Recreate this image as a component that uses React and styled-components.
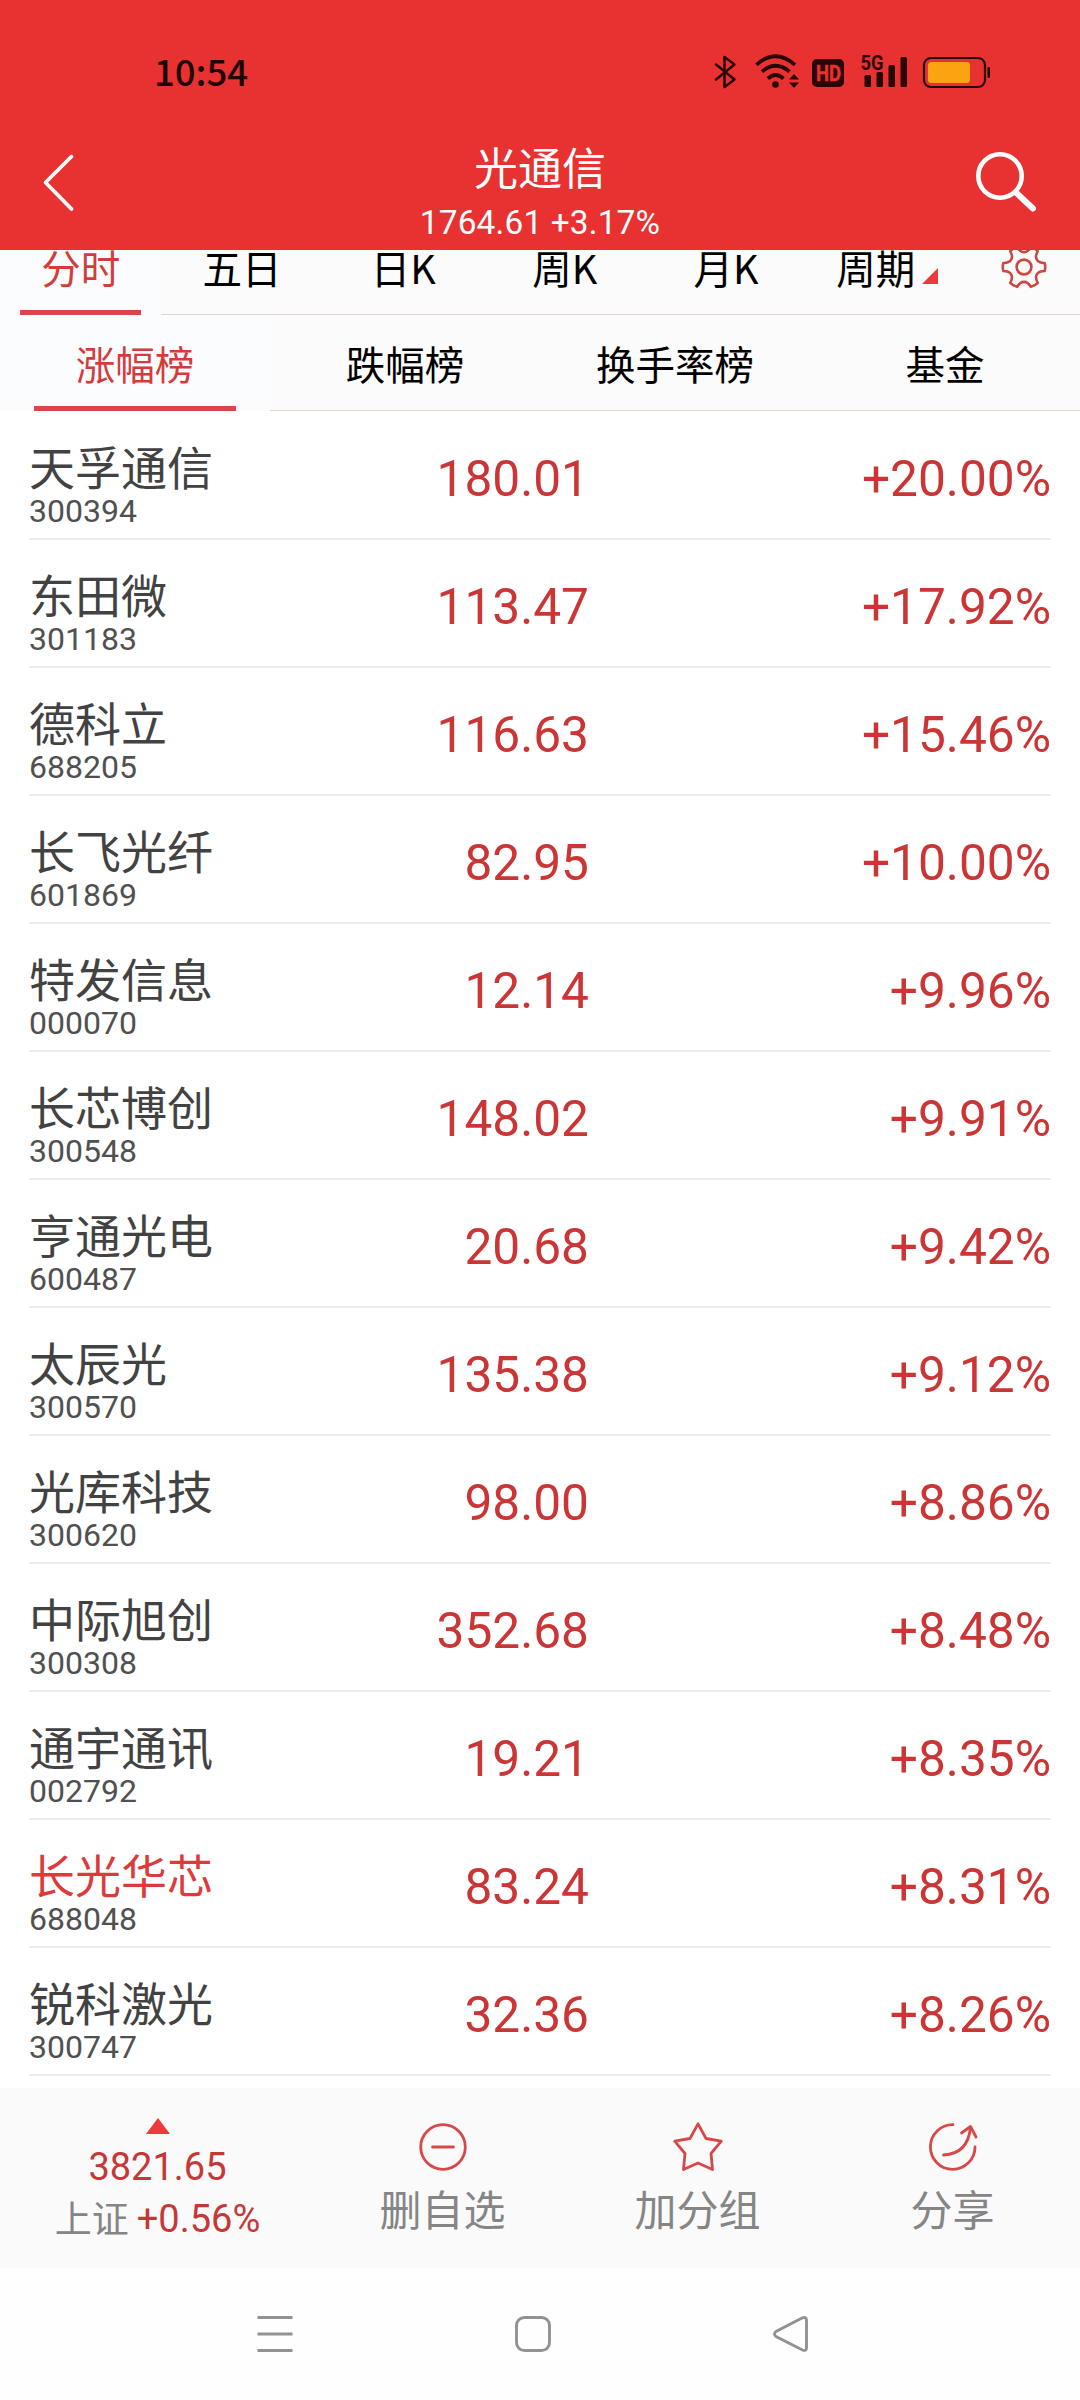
import React, { useState } from "react";
import styled, { createGlobalStyle, css } from "styled-components";

const stocks = [
  { name: "天孚通信", code: "300394", price: "180.01", change: "+20.00%" },
  { name: "东田微", code: "301183", price: "113.47", change: "+17.92%" },
  { name: "德科立", code: "688205", price: "116.63", change: "+15.46%" },
  { name: "长飞光纤", code: "601869", price: "82.95", change: "+10.00%" },
  { name: "特发信息", code: "000070", price: "12.14", change: "+9.96%" },
  { name: "长芯博创", code: "300548", price: "148.02", change: "+9.91%" },
  { name: "亨通光电", code: "600487", price: "20.68", change: "+9.42%" },
  { name: "太辰光", code: "300570", price: "135.38", change: "+9.12%" },
  { name: "光库科技", code: "300620", price: "98.00", change: "+8.86%" },
  { name: "中际旭创", code: "300308", price: "352.68", change: "+8.48%" },
  { name: "通宇通讯", code: "002792", price: "19.21", change: "+8.35%" },
  { name: "长光华芯", code: "688048", price: "83.24", change: "+8.31%", marked: true },
  { name: "锐科激光", code: "300747", price: "32.36", change: "+8.26%" },
];

const periods = ["分时", "五日", "日K", "周K", "月K", "周期"];
const ranks = ["涨幅榜", "跌幅榜", "换手率榜", "基金"];

const gearPath = () => {
  // six teeth with scooped valleys, centred in a 46x46 box
  let d = "";
  for (let i = 0; i < 6; i++) {
    const at = (deg, r) => {
      const a = ((i * 60 + deg) * Math.PI) / 180;
      return `${(23 + r * Math.cos(a)).toFixed(2)} ${(23 + r * Math.sin(a)).toFixed(2)}`;
    };
    d += `${i ? "L" : "M"}${at(-11, 21)}Q${at(0, 21.8)} ${at(11, 21)}C${at(17, 13.5)} ${at(43, 13.5)} ${at(49, 21)}`;
  }
  return d + "Z";
};

const StatusIcons = () => (
  <svg width="276" height="36" viewBox="714 54 276 36" fill="none" stroke="#2a0505">
    <path d="M716 64.500 L734.500 79.500 L724.500 87 V57 L734.500 64.500 L716 79.500" strokeWidth="2.500" strokeLinejoin="round" strokeLinecap="round" />
    <g strokeWidth="3.800">
      <path d="M756.500 64.800 Q775.500 47.600 795 64.800" />
      <path d="M762 71.600 Q775.500 60 789.500 71.600" />
      <path d="M768 78.600 Q775.500 71.600 783.500 78.600" />
    </g>
    <g fill="#2a0505" stroke="none">
      <circle cx="775.500" cy="84.500" r="3.300" />
      <path d="M789 79.500 L794 74 L799 79.500Z M789 82.500 L794 88 L799 82.500Z" />
      <rect x="812" y="59" width="32" height="28" rx="5" />
      <rect x="864.500" y="75" width="6.500" height="12" rx="1.500" />
      <rect x="876.500" y="72" width="6.500" height="15" rx="1.500" />
      <rect x="888.500" y="65" width="6.500" height="22" rx="1.500" />
      <rect x="900.500" y="57" width="6.500" height="30" rx="1.500" />
      <rect x="987.500" y="67" width="2.500" height="11" rx="1" />
    </g>
    <rect x="924" y="58" width="61" height="29" rx="7" strokeWidth="2.200" />
    <rect x="928" y="62" width="42" height="21" rx="3.500" fill="#fca311" stroke="none" />
    <g fontFamily="Roboto, sans-serif" fontWeight="700">
      <text x="816" y="81" fontSize="21.500" textLength="25" lengthAdjust="spacingAndGlyphs" fill="#e83131" stroke="#e83131" strokeWidth="0.500">HD</text>
      <text x="860.500" y="70" fontSize="20.500" textLength="23" lengthAdjust="spacingAndGlyphs" fill="#2a0505" stroke="none">5G</text>
    </g>
  </svg>
);

const App = () => {
  const [period, setPeriod] = useState(0);
  const [rank, setRank] = useState(0);

  return (
    <>
      <GlobalStyle />
      <Screen>
        <StatusBar>
          <Clock>10:54</Clock>
          <StatusIcons />
        </StatusBar>
        <Header>
          <svg width="34" height="60" viewBox="0 0 34 60" fill="none" stroke="#fff" strokeWidth="3.800" strokeLinecap="round" strokeLinejoin="round">
            <path d="M29.500 4.500 L3.500 30.500 L29.500 57" />
          </svg>
          <Heading>
            <Title>光通信</Title>
            <Quote>1764.61 +3.17%</Quote>
          </Heading>
          <svg width="60" height="60" viewBox="0 0 60 60" fill="none" stroke="#fff" strokeLinecap="round">
            <circle cx="24" cy="24" r="21.700" strokeWidth="4.600" />
            <path d="M40.500 41 L57 56.500" strokeWidth="6" />
          </svg>
        </Header>

        <PeriodClip>
          <PeriodTabs>
            {periods.map((label, idx) => (
              <Tab key={label} $active={idx === period} $inset={20} onClick={() => setPeriod(idx)}>
                {label}
                {label === "周期" && (
                  <Corner width="16" height="16" viewBox="0 0 16 16">
                    <path d="M0 16 L16 0 V16Z" fill="#ee3a3a" />
                  </Corner>
                )}
              </Tab>
            ))}
            <GearTab>
              <svg width="46" height="46" viewBox="0 0 46 46" fill="none" stroke="#d04444" strokeWidth="2.600" strokeLinejoin="round">
                <path d={gearPath()} />
                <circle cx="23" cy="23" r="7.400" />
              </svg>
            </GearTab>
          </PeriodTabs>
        </PeriodClip>

        <RankTabs>
          {ranks.map((label, idx) => (
            <Tab key={label} $active={idx === rank} $inset={34} onClick={() => setRank(idx)}>
              {label}
            </Tab>
          ))}
        </RankTabs>

        <List>
          {stocks.map(stock => (
            <Row key={stock.code}>
              <NameCell>
                <Name $marked={stock.marked}>{stock.name}</Name>
                <Code>{stock.code}</Code>
              </NameCell>
              <Figure>{stock.price}</Figure>
              <Figure>{stock.change}</Figure>
            </Row>
          ))}
        </List>

        <BottomBar>
          <IndexCell>
            <svg width="24" height="16" viewBox="0 0 24 16">
              <path d="M0 16 L12 0 L24 16Z" fill="#ee3a3a" />
            </svg>
            <IndexValue>3821.65</IndexValue>
            <IndexChange>
              <IndexName>上证</IndexName>+0.56%
            </IndexChange>
          </IndexCell>
          <Action>
            <ActionIcon viewBox="0 0 50 50">
              <circle cx="25" cy="25" r="22.300" />
              <path d="M14.500 25 H35.500" />
            </ActionIcon>
            删自选
          </Action>
          <Action>
            <ActionIcon viewBox="0 0 50 50">
              <path d="M25 1.800 L33 16.500 L48.300 19.200 L38 31.500 L39.500 47.500 L25 41 L10.500 47.500 L12 31.500 L1.700 19.200 L17 16.500Z" />
            </ActionIcon>
            加分组
          </Action>
          <Action>
            <ActionIcon viewBox="0 0 50 50">
              <path d="M25 2.700 A22.300 22.300 0 1 0 47 25" />
              <path d="M15.500 33 Q40 32 42.500 5 M33.500 11 L42.500 4.500 L48 15" />
            </ActionIcon>
            分享
          </Action>
        </BottomBar>

        <NavBar>
          <NavIcon viewBox="0 0 38 38">
            <path d="M1.500 2.500 H36.500 M1.500 19 H36.500 M1.500 35.500 H36.500" />
          </NavIcon>
          <NavIcon viewBox="0 0 38 38">
            <rect x="2.500" y="2.500" width="33" height="33" rx="8" />
          </NavIcon>
          <NavIcon viewBox="0 0 38 38">
            <path d="M30.500 2.800 L4 16.500 Q1 19 4 21.500 L30.500 35 Q34.500 36.500 34.500 32.500 V5.500 Q34.500 1.500 30.500 2.800Z" />
          </NavIcon>
        </NavBar>
      </Screen>
    </>
  );
};

const GlobalStyle = createGlobalStyle`
  body {
    margin: 0;
    background: #fff;
  }
  * {
    box-sizing: border-box;
  }
  svg {
    display: block;
    flex: none;
  }
`;

const Screen = styled.div`
  width: 1080px;
  height: 2400px;
  display: flex;
  flex-direction: column;
  overflow: hidden;
  background: #fff;
  font-family: Roboto, "Noto Sans CJK SC", sans-serif;
`;

const StatusBar = styled.div`
  height: 110px;
  padding: 54px 90px 0 154px;
  display: flex;
  align-items: flex-start;
  justify-content: space-between;
  background: #e83131;
`;

const Clock = styled.div`
  font-family: "Noto Sans CJK SC", sans-serif;
  font-size: 36.5px;
  font-weight: 500;
  line-height: 34px;
  color: #1c0404;
`;

const Header = styled.div`
  height: 140px;
  padding: 3px 44px 0 42px;
  display: flex;
  align-items: center;
  justify-content: space-between;
  background: #e83131;
`;

const Heading = styled.div`
  padding: 19px 0 0 28px;
  display: flex;
  flex-direction: column;
  align-items: center;
  color: #fff;
`;

const Title = styled.div`
  font-family: "Noto Sans CJK SC", sans-serif;
  font-size: 44px;
  line-height: 60px;
`;

const Quote = styled.div`
  margin-top: 3px;
  font-size: 33.4px;
  line-height: 48px;
  letter-spacing: 0.15px;
`;

/* the first tab strip is scrolled partly under the header */
const PeriodClip = styled.div`
  height: 65px;
  display: flex;
  align-items: flex-end;
  overflow: hidden;
`;

const PeriodTabs = styled.div`
  flex: none;
  width: 1080px;
  height: 96px;
  display: flex;
`;

const RankTabs = styled.div`
  height: 96px;
  display: flex;
`;

const Tab = styled.div`
  flex: 1;
  padding-bottom: 1px;
  display: flex;
  align-items: center;
  justify-content: center;
  font-family: "Noto Sans CJK SC", sans-serif;
  font-size: 39.5px;
  font-weight: 400;
  color: #000;
  background: #fbfbfb linear-gradient(#dfd6c4, #dfd6c4) bottom / 100% 1px no-repeat;
  ${({ $active, $inset }) => $active && css`
    color: #d43c3c;
    background: #fbfcfe linear-gradient(#d84848, #d84848) bottom / calc(100% - ${$inset * 2}px) 5px no-repeat;
  `}
`;

const GearTab = styled(Tab)`
  flex: none;
  width: 112px;
  padding-bottom: 0;
`;

const Corner = styled.svg`
  align-self: flex-end;
  margin: 0 0 30px 7px;
`;

const List = styled.div`
  height: 1677px;
  padding: 1px 29px 0;
`;

const Row = styled.div`
  height: 128px;
  display: grid;
  grid-template-columns: 260px 300px 1fr;
  border-bottom: 2px solid #ececec;
`;

const NameCell = styled.div`
  padding-top: 26px;
`;

const Name = styled.div`
  font-family: "Noto Sans CJK SC", sans-serif;
  font-size: 46px;
  line-height: 54px;
  color: ${({ $marked }) => ($marked ? "#dd3b3b" : "#424242")};
`;

const Code = styled.div`
  margin-top: 3px;
  font-size: 32px;
  line-height: 32px;
  color: #505050;
`;

const Figure = styled.div`
  font-size: 49.6px;
  line-height: 134px;
  text-align: right;
  color: #cb3535;
`;

const BottomBar = styled.div`
  height: 180px;
  display: grid;
  grid-template-columns: 315px repeat(3, 255px);
  background: #fafafa;
`;

const IndexCell = styled.div`
  padding-top: 30px;
  display: flex;
  flex-direction: column;
  align-items: center;
  color: #c63737;
`;

const IndexValue = styled.div`
  margin-top: 7px;
  font-size: 38px;
  line-height: 52px;
`;

const IndexChange = styled.div`
  display: flex;
  gap: 8px;
  font-size: 38px;
  line-height: 52px;
`;

const IndexName = styled.span`
  font-family: "Noto Sans CJK SC", sans-serif;
  font-size: 37px;
  line-height: 48px;
  color: #858585;
`;

const Action = styled.div`
  padding-top: 34px;
  display: flex;
  flex-direction: column;
  align-items: center;
  gap: 7px;
  font-family: "Noto Sans CJK SC", sans-serif;
  font-size: 42px;
  line-height: 58px;
  color: #858585;
`;

const ActionIcon = styled.svg`
  width: 50px;
  height: 50px;
  fill: none;
  stroke: #d84848;
  stroke-width: 2.800;
  stroke-linecap: round;
  stroke-linejoin: round;
`;

const NavBar = styled.div`
  height: 132px;
  padding: 0 270px 0 256px;
  display: flex;
  align-items: center;
  justify-content: space-between;
  background: #fefefe;
`;

const NavIcon = styled.svg`
  width: 38px;
  height: 38px;
  fill: none;
  stroke: #929292;
  stroke-width: 2.900;
`;

export default App;
